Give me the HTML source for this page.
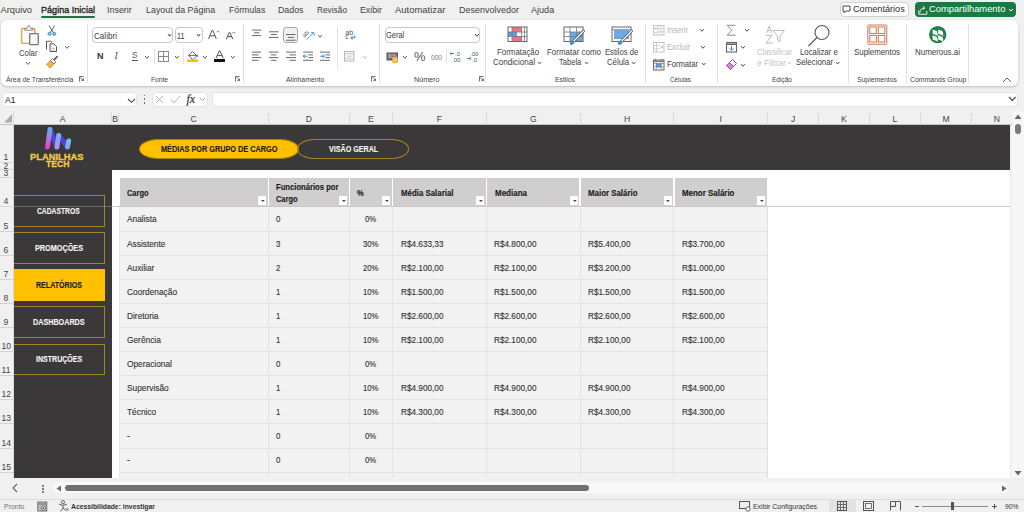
<!DOCTYPE html><html><head><meta charset="utf-8"><style>
html,body{margin:0;padding:0;width:1024px;height:512px;overflow:hidden;background:#f3f3f3}
.r{position:absolute;display:block}
.t{position:absolute;white-space:nowrap;line-height:1;font-family:"Liberation Sans",sans-serif;transform-origin:0 0}
svg.r{overflow:visible}
</style></head><body>
<div class="r" style="left:0.00px;top:0.00px;width:1024.00px;height:512.00px;background:#f0f0f0"></div>
<div class="t" style="left:0.50px;top:6.03px;font-size:9.30px;color:#424242;">Arquivo</div>
<div class="t" style="left:41.00px;top:6.03px;font-size:9.30px;color:#262626;transform:scaleX(0.976);-webkit-text-stroke:0.35px #262626;">Página Inicial</div>
<div class="t" style="left:107.20px;top:6.03px;font-size:9.30px;color:#424242;transform:scaleX(0.960);">Inserir</div>
<div class="t" style="left:145.70px;top:6.03px;font-size:9.30px;color:#424242;transform:scaleX(0.957);">Layout da Página</div>
<div class="t" style="left:228.70px;top:6.03px;font-size:9.30px;color:#424242;transform:scaleX(0.937);">Fórmulas</div>
<div class="t" style="left:278.20px;top:6.03px;font-size:9.30px;color:#424242;transform:scaleX(0.949);">Dados</div>
<div class="t" style="left:317.00px;top:6.03px;font-size:9.30px;color:#424242;transform:scaleX(0.893);">Revisão</div>
<div class="t" style="left:360.00px;top:6.03px;font-size:9.30px;color:#424242;transform:scaleX(0.946);">Exibir</div>
<div class="t" style="left:395.00px;top:6.03px;font-size:9.30px;color:#424242;transform:scaleX(1.016);">Automatizar</div>
<div class="t" style="left:458.60px;top:6.03px;font-size:9.30px;color:#424242;transform:scaleX(0.966);">Desenvolvedor</div>
<div class="t" style="left:531.30px;top:6.03px;font-size:9.30px;color:#424242;transform:scaleX(0.975);">Ajuda</div>
<div class="r" style="left:41.00px;top:16.20px;width:54.00px;height:2.00px;background:#1e7145;border-radius:1px"></div>
<div class="r" style="left:839.50px;top:1.50px;width:69.70px;height:15.90px;background:#fff;border:1px solid #d1d1d1;border-radius:4px;box-sizing:border-box"></div>
<svg class="r" style="left:842px;top:5px" width="9" height="9" viewBox="0 0 9 9"><path d="M1 1h7v5H3.8L2 7.8V6H1z" fill="none" stroke="#444" stroke-width="1"/></svg>
<div class="t" style="left:853.30px;top:5.23px;font-size:9.30px;color:#2a2a2a;transform:scaleX(0.981);">Comentários</div>
<div class="r" style="left:914.80px;top:1.50px;width:101.70px;height:15.90px;background:#1b7a43;border-radius:4px"></div>
<svg class="r" style="left:917px;top:4px" width="12" height="11" viewBox="0 0 12 11"><path d="M1.8 6.5v3.8h8V7" fill="none" stroke="#fff" stroke-width="0.9"/><path d="M3 8.5c0-3 2-4.5 4.5-4.5M6 2.3l1.8 1.7L6 5.8" fill="none" stroke="#fff" stroke-width="0.9"/></svg>
<div class="t" style="left:928.60px;top:5.23px;font-size:9.30px;color:#ffffff;transform:scaleX(1.005);">Compartilhamento</div>
<svg class="r" style="left:1008px;top:8px" width="6" height="4" viewBox="0 0 6 4"><path d="M1 1l2 2 2-2" fill="none" stroke="#fff" stroke-width="1"/></svg>
<div class="r" style="left:1.20px;top:19.80px;width:1017.00px;height:66.00px;background:#fff;border-radius:6px;box-shadow:0 1px 2.5px rgba(0,0,0,0.22)"></div>
<div class="r" style="left:86.50px;top:24.00px;width:1.00px;height:59.00px;background:#e1e1e1"></div>
<div class="r" style="left:242.70px;top:24.00px;width:1.00px;height:59.00px;background:#e1e1e1"></div>
<div class="r" style="left:378.50px;top:24.00px;width:1.00px;height:59.00px;background:#e1e1e1"></div>
<div class="r" style="left:485.40px;top:24.00px;width:1.00px;height:59.00px;background:#e1e1e1"></div>
<div class="r" style="left:644.60px;top:24.00px;width:1.00px;height:59.00px;background:#e1e1e1"></div>
<div class="r" style="left:717.40px;top:24.00px;width:1.00px;height:59.00px;background:#e1e1e1"></div>
<div class="r" style="left:847.60px;top:24.00px;width:1.00px;height:59.00px;background:#e1e1e1"></div>
<div class="r" style="left:906.20px;top:24.00px;width:1.00px;height:59.00px;background:#e1e1e1"></div>
<div class="r" style="left:968.00px;top:24.00px;width:1.00px;height:59.00px;background:#e1e1e1"></div>
<div class="t" style="left:5.50px;top:76.03px;font-size:7.40px;color:#424242;transform:scaleX(0.927);">Área de Transferência</div>
<div class="t" style="left:151.00px;top:76.03px;font-size:7.40px;color:#424242;transform:scaleX(0.898);">Fonte</div>
<div class="t" style="left:286.00px;top:76.03px;font-size:7.40px;color:#424242;transform:scaleX(0.933);">Alinhamento</div>
<div class="t" style="left:413.60px;top:76.03px;font-size:7.40px;color:#424242;transform:scaleX(0.969);">Número</div>
<div class="t" style="left:555.00px;top:76.03px;font-size:7.40px;color:#424242;transform:scaleX(0.918);">Estilos</div>
<div class="t" style="left:670.00px;top:76.03px;font-size:7.40px;color:#424242;transform:scaleX(0.851);">Células</div>
<div class="t" style="left:772.00px;top:76.03px;font-size:7.40px;color:#424242;transform:scaleX(0.884);">Edição</div>
<div class="t" style="left:857.00px;top:76.03px;font-size:7.40px;color:#424242;transform:scaleX(0.926);">Suplementos</div>
<div class="t" style="left:909.50px;top:76.03px;font-size:7.40px;color:#424242;transform:scaleX(0.935);">Commands Group</div>
<svg class="r" style="left:78.5px;top:76px" width="5" height="6" viewBox="0 0 5 6"><path d="M0.5 5.5V0.5h4M1.5 1.5l3 3M4.5 2.5v2h-2" fill="none" stroke="#616161" stroke-width="0.9"/></svg>
<svg class="r" style="left:234.7px;top:76px" width="5" height="6" viewBox="0 0 5 6"><path d="M0.5 5.5V0.5h4M1.5 1.5l3 3M4.5 2.5v2h-2" fill="none" stroke="#616161" stroke-width="0.9"/></svg>
<svg class="r" style="left:370.6px;top:76px" width="5" height="6" viewBox="0 0 5 6"><path d="M0.5 5.5V0.5h4M1.5 1.5l3 3M4.5 2.5v2h-2" fill="none" stroke="#616161" stroke-width="0.9"/></svg>
<svg class="r" style="left:478.5px;top:76px" width="5" height="6" viewBox="0 0 5 6"><path d="M0.5 5.5V0.5h4M1.5 1.5l3 3M4.5 2.5v2h-2" fill="none" stroke="#616161" stroke-width="0.9"/></svg>
<svg class="r" style="left:14px;top:20px" width="50" height="52" viewBox="0 0 50 52"><rect x="7.6" y="8.4" width="13.2" height="15" rx="0.8" fill="#fbfbfb" stroke="#e8a33a" stroke-width="1.4"/>
<path d="M10.6 10.2V8.6h2.2l1.6-3.2h0.8l1.6 3.2h2.2v1.6z" fill="#fff" stroke="#8a8a8a" stroke-width="1"/>
<rect x="15.7" y="13.7" width="8.6" height="11" rx="0.8" fill="#f6f6f6" stroke="#777" stroke-width="1.3"/>
<path d="M35 5.5l4.5 7.5M40.6 5.5l-4.5 7.5" stroke="#555" stroke-width="0.9"/>
<circle cx="35.5" cy="13.8" r="1.6" fill="#7ec0e6" stroke="#3f8fc0" stroke-width="0.8"/><circle cx="40.2" cy="13.8" r="1.6" fill="#7ec0e6" stroke="#3f8fc0" stroke-width="0.8"/>
<path d="M32.5 29.5V21.3h4.2l1.3 1.3" fill="none" stroke="#555" stroke-width="1"/>
<path d="M36 23.8h3.8l2.7 2.7v5h-6.5z" fill="#fff" stroke="#555" stroke-width="1"/><path d="M37.5 28.3h3.3M37.5 30h3.3" stroke="#aaa" stroke-width="0.8"/>
<path d="M32.5 44.5l4.5-4.5 3.5 3.5-4.5 4.5z" fill="#f3b54a" stroke="#de8f1e" stroke-width="0.8"/>
<path d="M36.5 40.5l2-2 3.5 3.5-2 2z" fill="#fff" stroke="#666" stroke-width="0.8"/>
<path d="M39.5 39.5l3.5-3.5 0.8 0.8-3.5 3.5z" fill="#666" stroke="#555" stroke-width="0.8"/></svg>
<div class="t" style="left:18.75px;top:48.73px;font-size:8.70px;color:#424242;transform:scaleX(0.890);">Colar</div>
<svg class="r" style="left:25px;top:61.1px" width="6" height="4.4"><path d="M1 1L3.0 3.4L5 1" fill="none" stroke="#616161" stroke-width="1.0"/></svg>
<svg class="r" style="left:64px;top:45px" width="6" height="4.4"><path d="M1 1L3.0 3.4L5 1" fill="none" stroke="#616161" stroke-width="1.0"/></svg>
<div class="r" style="left:92.40px;top:27.40px;width:80.80px;height:15.90px;background:#fff;border:1px solid #c8c8c8;border-radius:4px;box-sizing:border-box"></div>
<div class="t" style="left:94.00px;top:31.53px;font-size:8.70px;color:#3b3b3b;transform:scaleX(0.933);">Calibri</div>
<svg class="r" style="left:166.7px;top:32.8px" width="5.2" height="4.2"><path d="M1 1L2.6 3.2L4.2 1" fill="none" stroke="#424242" stroke-width="1.0"/></svg>
<div class="r" style="left:175.00px;top:27.40px;width:28.30px;height:15.90px;background:#fff;border:1px solid #c8c8c8;border-radius:4px;box-sizing:border-box"></div>
<div class="t" style="left:177.00px;top:31.53px;font-size:8.70px;color:#3b3b3b;transform:scaleX(0.819);">11</div>
<svg class="r" style="left:196.4px;top:32.8px" width="5.2" height="4.2"><path d="M1 1L2.6 3.2L4.2 1" fill="none" stroke="#424242" stroke-width="1.0"/></svg>
<svg class="r" style="left:207px;top:29px" width="16" height="12" viewBox="0 0 16 12"><path d="M1.5 10L5 1.3h0.8L9.3 10M2.8 6.8h5.2" fill="none" stroke="#555" stroke-width="1"/><path d="M9.8 3.3l1.4-1.4 1.4 1.4" fill="none" stroke="#3a8fd0" stroke-width="0.9"/></svg>
<svg class="r" style="left:225px;top:31px" width="14" height="10" viewBox="0 0 14 10"><path d="M1.3 8.2L4.2 1.5h0.7L7.8 8.2M2.4 5.6h4.3" fill="none" stroke="#555" stroke-width="1"/><path d="M7.5 1l1.3 1.3L10.1 1" fill="none" stroke="#3a8fd0" stroke-width="0.9"/></svg>
<div class="t" style="left:96.60px;top:51.51px;font-size:9.20px;font-weight:bold;color:#333;transform:scaleX(0.978);">N</div>
<div class="t" style="left:114.5px;top:50.5px;font-size:10px;font-family:'Liberation Serif',serif;font-style:italic;color:#555">I</div>
<div class="t" style="left:132.00px;top:51.38px;font-size:9.00px;color:#555;transform:scaleX(0.916);">S</div>
<div class="r" style="left:132.00px;top:60.00px;width:5.50px;height:1.00px;background:#555"></div>
<svg class="r" style="left:144px;top:54.5px" width="5.8" height="4.3"><path d="M1 1L2.9 3.3L4.8 1" fill="none" stroke="#616161" stroke-width="1.0"/></svg>
<div class="r" style="left:153.50px;top:49.00px;width:1.00px;height:15.00px;background:#e1e1e1"></div>
<svg class="r" style="left:157px;top:50px" width="13" height="13" viewBox="0 0 13 13"><rect x="1.5" y="1.5" width="10" height="10" fill="none" stroke="#8a8a8a" stroke-width="1"/><path d="M6.5 1.5v10M1.5 6.5h10" stroke="#8a8a8a" stroke-width="1"/></svg>
<svg class="r" style="left:173.5px;top:54.5px" width="5.8" height="4.3"><path d="M1 1L2.9 3.3L4.8 1" fill="none" stroke="#616161" stroke-width="1.0"/></svg>
<div class="r" style="left:182.50px;top:49.00px;width:1.00px;height:15.00px;background:#e1e1e1"></div>
<svg class="r" style="left:186px;top:50px" width="14" height="13" viewBox="0 0 14 13"><path d="M2.5 5.5l4-4 4.3 4.3-4 4z" fill="#fff" stroke="#555" stroke-width="0.9"/><path d="M2.5 5.5h8.3" stroke="#555" stroke-width="0.8"/><path d="M10.8 4.5q1.3 1.5 0.5 2.5" fill="none" stroke="#3a8fd0" stroke-width="1.2"/><rect x="1.2" y="9.4" width="11" height="2.6" fill="#f2c200"/></svg>
<svg class="r" style="left:202.3px;top:54.5px" width="5.8" height="4.3"><path d="M1 1L2.9 3.3L4.8 1" fill="none" stroke="#616161" stroke-width="1.0"/></svg>
<svg class="r" style="left:214px;top:50px" width="12" height="10" viewBox="0 0 12 10"><path d="M2 8.2L5.3 0.8h0.7L9.3 8.2M3.2 5.6h4.9" fill="none" stroke="#555" stroke-width="1"/></svg>
<div class="r" style="left:214.25px;top:59.40px;width:10.95px;height:2.60px;background:#111"></div>
<svg class="r" style="left:229.5px;top:54.5px" width="5.8" height="4.3"><path d="M1 1L2.9 3.3L4.8 1" fill="none" stroke="#616161" stroke-width="1.0"/></svg>
<div class="r" style="left:283.10px;top:27.10px;width:15.40px;height:16.00px;background:#efefef;border:1px solid #a8a8a8;border-radius:3px;box-sizing:border-box"></div>
<svg class="r" style="left:240px;top:24px" width="140" height="45" viewBox="0 0 140 45"><path d="M12 6.100000000000001H21.19999999999999" stroke="#6a6a6a" stroke-width="1.0"/><path d="M14 8.799999999999997H19.5" stroke="#6a6a6a" stroke-width="1.0"/><path d="M12 11.600000000000001H21.19999999999999" stroke="#6a6a6a" stroke-width="1.0"/><path d="M29 7.800000000000001H38.60000000000002" stroke="#6a6a6a" stroke-width="1.0"/><path d="M31 10.5H36.60000000000002" stroke="#6a6a6a" stroke-width="1.0"/><path d="M29 13.399999999999999H38.60000000000002" stroke="#6a6a6a" stroke-width="1.0"/><path d="M46 10.5H55.60000000000002" stroke="#6a6a6a" stroke-width="1.0"/><path d="M47.80000000000001 13.399999999999999H54" stroke="#6a6a6a" stroke-width="1.0"/><path d="M46 16.25H55.60000000000002" stroke="#6a6a6a" stroke-width="1.0"/><path d="M12 28.1H21" stroke="#6a6a6a" stroke-width="1.0"/><path d="M12 30.9H18.5" stroke="#6a6a6a" stroke-width="1.0"/><path d="M12 33.6H21" stroke="#6a6a6a" stroke-width="1.0"/><path d="M12 36.3H18.5" stroke="#6a6a6a" stroke-width="1.0"/><path d="M29 28.1H38.5" stroke="#6a6a6a" stroke-width="1.0"/><path d="M31 30.9H36.5" stroke="#6a6a6a" stroke-width="1.0"/><path d="M29 33.6H38.5" stroke="#6a6a6a" stroke-width="1.0"/><path d="M31 36.3H36.5" stroke="#6a6a6a" stroke-width="1.0"/><path d="M46 28.1H56" stroke="#6a6a6a" stroke-width="1.0"/><path d="M49.5 30.9H56" stroke="#6a6a6a" stroke-width="1.0"/><path d="M46 33.6H56" stroke="#6a6a6a" stroke-width="1.0"/><path d="M49.5 36.3H56" stroke="#6a6a6a" stroke-width="1.0"/><path d="M63 28.1H73" stroke="#6a6a6a" stroke-width="1.0"/><path d="M68.5 30.9H73" stroke="#6a6a6a" stroke-width="1.0"/><path d="M68.5 33.6H73" stroke="#6a6a6a" stroke-width="1.0"/><path d="M63 36.3H73" stroke="#6a6a6a" stroke-width="1.0"/><path d="M80 28.1H90" stroke="#6a6a6a" stroke-width="1.0"/><path d="M85.5 30.9H90" stroke="#6a6a6a" stroke-width="1.0"/><path d="M85.5 33.6H90" stroke="#6a6a6a" stroke-width="1.0"/><path d="M80 36.3H90" stroke="#6a6a6a" stroke-width="1.0"/><path d="M63 32.2h4.5M63 32.2l2-1.6M63 32.2l2 1.6" transform="translate(0,0)" fill="none" stroke="#3a8fd0" stroke-width="1"/><path d="M80 32.2h4.5M84.5 32.2l-2-1.6M84.5 32.2l-2 1.6" fill="none" stroke="#3a8fd0" stroke-width="1"/><text x="0" y="0" font-size="6.2" font-family="Liberation Sans" fill="#5a5a5a" transform="translate(64.5,14) rotate(-45)">ab</text><path d="M66.5 15.5L73.5 9" stroke="#3a8fd0" stroke-width="0.9"/><path d="M71 8.6h3v3" fill="none" stroke="#3a8fd0" stroke-width="0.9"/></svg>
<svg class="r" style="left:316.8px;top:33.6px" width="5.8" height="4.3"><path d="M1 1L2.9 3.3L4.8 1" fill="none" stroke="#616161" stroke-width="1.0"/></svg>
<div class="r" style="left:337.00px;top:27.00px;width:1.00px;height:41.00px;background:#e1e1e1"></div>
<svg class="r" style="left:344px;top:28px" width="14" height="14" viewBox="0 0 14 14"><text x="1.3" y="6.6" font-size="7" font-family="Liberation Sans" fill="#555" textLength="8" lengthAdjust="spacingAndGlyphs">ab</text><text x="1.3" y="11.2" font-size="6.5" font-family="Liberation Sans" fill="#555">c</text><path d="M10.8 7.2v2.6H6.8M6.8 9.8l1.8-1.5M6.8 9.8l1.8 1.5" fill="none" stroke="#3a9ad0" stroke-width="1.1"/></svg>
<svg class="r" style="left:344px;top:51px" width="11" height="11" viewBox="0 0 11 11"><rect x="0.5" y="0.5" width="9.5" height="9.5" fill="#f6f6f6" stroke="#b8b8b8"/><path d="M0.5 2.8h9.5M0.5 7.7h9.5M3 5.25h4.5" stroke="#c0c0c0" stroke-width="0.8"/></svg>
<svg class="r" style="left:362.3px;top:55px" width="5.8" height="4.3"><path d="M1 1L2.9 3.3L4.8 1" fill="none" stroke="#c4c4c4" stroke-width="1.0"/></svg>
<div class="r" style="left:384.50px;top:27.40px;width:95.90px;height:15.60px;background:#fff;border:1px solid #c8c8c8;border-radius:4px;box-sizing:border-box"></div>
<div class="t" style="left:386.00px;top:31.26px;font-size:8.90px;color:#3b3b3b;transform:scaleX(0.841);">Geral</div>
<svg class="r" style="left:473.8px;top:33.2px" width="5.8" height="4.3"><path d="M1 1L2.9 3.3L4.8 1" fill="none" stroke="#424242" stroke-width="1.0"/></svg>
<svg class="r" style="left:386px;top:52px" width="14" height="12" viewBox="0 0 14 12"><rect x="1" y="1" width="10.5" height="7" fill="#777" stroke="#555"/><path d="M2.5 3h3M2.5 5h3M6.5 3h3" stroke="#ddd" stroke-width="0.8"/><rect x="6" y="4.5" width="6" height="6.5" rx="2" fill="#f0a030"/><path d="M7 6.8h4M7 8.8h4" stroke="#fff" stroke-width="0.7"/></svg>
<svg class="r" style="left:401.9px;top:54.5px" width="5.8" height="4.3"><path d="M1 1L2.9 3.3L4.8 1" fill="none" stroke="#616161" stroke-width="1.0"/></svg>
<div class="t" style="left:413.50px;top:49.99px;font-size:13.00px;color:#555;transform:scaleX(0.995);">%</div>
<div class="t" style="left:431.00px;top:53.57px;font-size:7.00px;color:#777;transform:scaleX(0.942);">000</div>
<div class="r" style="left:446.00px;top:49.00px;width:1.00px;height:15.00px;background:#e1e1e1"></div>
<svg class="r" style="left:449px;top:50px" width="13" height="12" viewBox="0 0 13 12"><path d="M1 3.5h4M1 3.5l1.5-1.3M1 3.5l1.5 1.3" fill="none" stroke="#3a8fd0" stroke-width="1"/><text x="6" y="6" font-size="6" font-family="Liberation Sans" fill="#555">.0</text><text x="3" y="11.5" font-size="6" font-family="Liberation Sans" fill="#555">.00</text></svg>
<svg class="r" style="left:466px;top:50px" width="13" height="12" viewBox="0 0 13 12"><text x="4" y="5.5" font-size="6" font-family="Liberation Sans" fill="#555">.00</text><path d="M1 8.5h4M5 8.5l-1.5-1.3M5 8.5l-1.5 1.3" fill="none" stroke="#3a8fd0" stroke-width="1"/><text x="6" y="11.5" font-size="6" font-family="Liberation Sans" fill="#555">.0</text></svg>
<svg class="r" style="left:507px;top:26px" width="22" height="18" viewBox="0 0 22 18"><rect x="5" y="1" width="9.5" height="6" fill="#ee7480"/><rect x="1" y="6" width="9" height="4" fill="#5a9ee0"/><rect x="10" y="6" width="4.5" height="3" fill="#fff"/><rect x="5" y="10" width="9.5" height="5.5" fill="#ee7480"/><rect x="1" y="1" width="19" height="14.5" fill="none" stroke="#666" stroke-width="1"/><path d="M1 6h19M1 10.5h19M5 1v14.5M14.5 1v14.5M17.5 1v14.5" stroke="#777" stroke-width="0.8"/></svg>
<div class="t" style="left:496.60px;top:47.93px;font-size:8.70px;color:#424242;transform:scaleX(0.909);">Formatação</div>
<div class="t" style="left:492.70px;top:58.23px;font-size:8.70px;color:#424242;transform:scaleX(0.924);">Condicional</div>
<svg class="r" style="left:536.7px;top:60.6px" width="5.2" height="4"><path d="M1 1L2.6 3L4.2 1" fill="none" stroke="#616161" stroke-width="1.0"/></svg>
<svg class="r" style="left:563px;top:26px" width="24" height="20" viewBox="0 0 24 20"><rect x="7" y="6" width="13" height="9.5" fill="#6aaae8"/><rect x="1" y="1" width="19" height="14.5" fill="none" stroke="#666" stroke-width="1"/><path d="M1 6h19M1 10.5h19M7 1v14.5M13.5 1v14.5" stroke="#777" stroke-width="0.8"/><path d="M9.5 16.5L20.5 5" stroke="#555" stroke-width="2.8" stroke-linecap="round"/><path d="M9.5 16.5L20.5 5" stroke="#fff" stroke-width="1.2" stroke-linecap="round"/><ellipse cx="9" cy="16.8" rx="2.4" ry="1.8" fill="#3a8fd0" transform="rotate(-45 9 16.8)"/></svg>
<div class="t" style="left:546.60px;top:47.93px;font-size:8.70px;color:#424242;transform:scaleX(0.916);">Formatar como</div>
<div class="t" style="left:559.00px;top:58.23px;font-size:8.70px;color:#424242;transform:scaleX(0.870);">Tabela</div>
<svg class="r" style="left:583.7px;top:60.6px" width="5.2" height="4"><path d="M1 1L2.6 3L4.2 1" fill="none" stroke="#616161" stroke-width="1.0"/></svg>
<svg class="r" style="left:611px;top:26px" width="24" height="20" viewBox="0 0 24 20"><rect x="1" y="1" width="19" height="14.5" fill="#fff" stroke="#666" stroke-width="1"/><path d="M1 3.5h19" stroke="#888" stroke-width="0.8"/><rect x="3" y="4" width="15" height="8.5" fill="#6aaae8"/><path d="M3 12.5h15" stroke="#888" stroke-width="0.8"/><path d="M9.5 16.5L20.5 5" stroke="#555" stroke-width="2.8" stroke-linecap="round"/><path d="M9.5 16.5L20.5 5" stroke="#fff" stroke-width="1.2" stroke-linecap="round"/><ellipse cx="9" cy="16.8" rx="2.4" ry="1.8" fill="#3a8fd0" transform="rotate(-45 9 16.8)"/></svg>
<div class="t" style="left:605.00px;top:47.93px;font-size:8.70px;color:#424242;transform:scaleX(0.883);">Estilos de</div>
<div class="t" style="left:606.75px;top:58.23px;font-size:8.70px;color:#424242;transform:scaleX(0.892);">Célula</div>
<svg class="r" style="left:630.7px;top:60.6px" width="5.2" height="4"><path d="M1 1L2.6 3L4.2 1" fill="none" stroke="#616161" stroke-width="1.0"/></svg>
<svg class="r" style="left:652px;top:24px" width="14" height="12" viewBox="0 0 14 12"><rect x="1.5" y="1.5" width="10.5" height="9.5" fill="none" stroke="#c4c4c4" stroke-width="1"/><path d="M6 1.5v9.5M9 1.5v9.5M6 4.5h6M6 7.8h6" stroke="#c8c8c8" stroke-width="0.8"/><path d="M2.5 4.5h2.5M3.75 3.2v2.6M2.5 8.5h2.5" stroke="#b8b8b8" stroke-width="0.8"/></svg>
<div class="t" style="left:667.00px;top:25.83px;font-size:8.70px;color:#b4b4b4;transform:scaleX(0.869);">Inserir</div>
<svg class="r" style="left:699px;top:28px" width="5.8" height="4.3"><path d="M1 1L2.9 3.3L4.8 1" fill="none" stroke="#555" stroke-width="1.0"/></svg>
<svg class="r" style="left:652px;top:41px" width="14" height="12" viewBox="0 0 14 12"><rect x="1.5" y="1.5" width="10.5" height="9.5" fill="none" stroke="#c4c4c4" stroke-width="1"/><path d="M1.5 4.5h6M1.5 7.8h6M4.5 1.5v9.5" stroke="#c8c8c8" stroke-width="0.8"/><path d="M8.3 4.5l3 3M11.3 4.5l-3 3" stroke="#b8b8b8" stroke-width="0.8"/></svg>
<div class="t" style="left:667.00px;top:42.83px;font-size:8.70px;color:#b4b4b4;transform:scaleX(0.881);">Excluir</div>
<svg class="r" style="left:700px;top:45px" width="5.8" height="4.3"><path d="M1 1L2.9 3.3L4.8 1" fill="none" stroke="#555" stroke-width="1.0"/></svg>
<svg class="r" style="left:652px;top:58px" width="14" height="13" viewBox="0 0 14 13"><rect x="1.5" y="2" width="10.5" height="10" fill="#fff" stroke="#666" stroke-width="1"/><path d="M1.5 3.3h10.5" stroke="#666" stroke-width="1.2"/><rect x="4" y="5" width="5.5" height="4.5" fill="#5a9ee0"/><path d="M1.5 5.5h10.5M1.5 9h10.5M4.2 3.3v8.7M9.3 3.3v8.7" stroke="#888" stroke-width="0.7"/><path d="M3.5 0.8v2M10 0.8v2" stroke="#3a8fd0" stroke-width="1"/></svg>
<div class="t" style="left:667.00px;top:59.83px;font-size:8.70px;color:#3b3b3b;transform:scaleX(0.878);">Formatar</div>
<svg class="r" style="left:701px;top:62.3px" width="5.4" height="4"><path d="M1 1L2.7 3L4.4 1" fill="none" stroke="#555" stroke-width="1.0"/></svg>
<svg class="r" style="left:724px;top:23px" width="14" height="14" viewBox="0 0 14 14"><path d="M11.5 2.3H3.2l4.6 5-4.6 4.9h8.6" fill="none" stroke="#8a8a8a" stroke-width="1"/></svg>
<svg class="r" style="left:743.7px;top:28px" width="5.8" height="4.3"><path d="M1 1L2.9 3.3L4.8 1" fill="none" stroke="#555" stroke-width="1.0"/></svg>
<svg class="r" style="left:725px;top:41px" width="13" height="12" viewBox="0 0 13 12"><rect x="1.5" y="1.5" width="10" height="9.5" fill="#fff" stroke="#666" stroke-width="1.1"/><path d="M1.5 3.2h10" stroke="#666" stroke-width="1.6"/><path d="M6.5 4.8v4.5M6.5 9.3l-2-2M6.5 9.3l2-2" fill="none" stroke="#3a8fd0" stroke-width="1"/></svg>
<svg class="r" style="left:739.8px;top:45.4px" width="5.8" height="4.3"><path d="M1 1L2.9 3.3L4.8 1" fill="none" stroke="#555" stroke-width="1.0"/></svg>
<svg class="r" style="left:725px;top:58px" width="13" height="13" viewBox="0 0 13 13"><path d="M1.5 7.5l6-6 4 4-6 6z" fill="#fff" stroke="#a848a8" stroke-width="1"/><path d="M1.5 7.5l3-3 4 4-3 3z" fill="#d88ad0" stroke="#a848a8" stroke-width="1"/></svg>
<svg class="r" style="left:740px;top:62.5px" width="5.8" height="4.3"><path d="M1 1L2.9 3.3L4.8 1" fill="none" stroke="#555" stroke-width="1.0"/></svg>
<svg class="r" style="left:764px;top:24px" width="24" height="21" viewBox="0 0 24 21"><path d="M2.5 9L5.2 2l2.8 7M3.4 6.6h3.7M2 11.5h6l-6 7.5h6.5M9 6.5h11.5L16 12v5.5l-2.5-1.5V12z" fill="none" stroke="#bdbdbd" stroke-width="1"/></svg>
<div class="t" style="left:757.00px;top:48.23px;font-size:8.70px;color:#c4c4c4;transform:scaleX(0.872);">Classificar</div>
<div class="t" style="left:757.00px;top:58.73px;font-size:8.70px;color:#c4c4c4;transform:scaleX(0.983);">e Filtrar</div>
<svg class="r" style="left:787px;top:60.5px" width="5.2" height="4"><path d="M1 1L2.6 3L4.2 1" fill="none" stroke="#c4c4c4" stroke-width="1.0"/></svg>
<svg class="r" style="left:807px;top:24px" width="24" height="23" viewBox="0 0 24 23"><circle cx="15" cy="8.5" r="7" fill="none" stroke="#555" stroke-width="1.1"/><path d="M10 13.5L1.5 22" stroke="#555" stroke-width="1.1"/></svg>
<div class="t" style="left:799.60px;top:48.03px;font-size:8.70px;color:#3b3b3b;transform:scaleX(0.898);">Localizar e</div>
<div class="t" style="left:796.30px;top:58.43px;font-size:8.70px;color:#3b3b3b;transform:scaleX(0.905);">Selecionar</div>
<svg class="r" style="left:835px;top:60.5px" width="5.4" height="4"><path d="M1 1L2.7 3L4.4 1" fill="none" stroke="#555" stroke-width="1.0"/></svg>
<svg class="r" style="left:866px;top:24px" width="22" height="22" viewBox="0 0 22 22"><rect x="1.8" y="1" width="19" height="19.3" rx="0.8" fill="#fdf4ef" stroke="#cf7a55" stroke-width="1"/><rect x="3.8" y="3" width="6.5" height="6.5" fill="#fff" stroke="#cf7a55" stroke-width="1"/><rect x="12.3" y="3" width="6.5" height="6.5" fill="#fff" stroke="#cf7a55" stroke-width="1"/><rect x="3.8" y="11.5" width="6.5" height="6.5" fill="#fff" stroke="#cf7a55" stroke-width="1"/><rect x="12.3" y="11.5" width="6.5" height="6.5" fill="#fff" stroke="#cf7a55" stroke-width="1"/></svg>
<div class="t" style="left:854.00px;top:48.23px;font-size:8.70px;color:#3b3b3b;transform:scaleX(0.906);">Suplementos</div>
<svg class="r" style="left:928px;top:25px" width="20" height="20" viewBox="0 0 20 20"><circle cx="9.7" cy="9.6" r="8.7" fill="#1f8048"/><g fill="#fff"><path d="M4.6 4.6h4.1l0.9 2v3.2L8.7 8.8H4.6z" transform="skewY(20) translate(0,-1.7)"/><path d="M10.2 4.6h4.1l0.9 2v3.2l-0.9-1H10.2z" transform="skewY(20) translate(0,-3.7)"/><path d="M4.6 10.3h4.1l0.9 2v3.2l-0.9-1H4.6z" transform="skewY(20) translate(0,-1.7)"/><path d="M10.2 10.3h4.1l0.9 2v3.2l-0.9-1H10.2z" transform="skewY(20) translate(0,-3.7)"/></g></svg>
<div class="t" style="left:915.00px;top:48.23px;font-size:8.70px;color:#3b3b3b;transform:scaleX(0.912);">Numerous.ai</div>
<svg class="r" style="left:1002px;top:77px" width="10" height="6" viewBox="0 0 10 6"><path d="M1 5l4-4 4 4" fill="none" stroke="#555" stroke-width="1"/></svg>
<div class="r" style="left:2.00px;top:91.60px;width:135.00px;height:15.70px;background:#fff;border:1px solid #e3e3e3;border-radius:4px;box-sizing:border-box"></div>
<div class="t" style="left:4.50px;top:95.34px;font-size:9.40px;color:#262626;transform:scaleX(0.913);">A1</div>
<svg class="r" style="left:127px;top:97.8px" width="9" height="5.3"><path d="M1 1L4.5 4.3L8 1" fill="none" stroke="#4a4a4a" stroke-width="1.1"/></svg>
<div class="r" style="left:143.50px;top:94.50px;width:1.50px;height:1.50px;background:#555;border-radius:1px"></div>
<div class="r" style="left:143.50px;top:98.30px;width:1.50px;height:1.50px;background:#555;border-radius:1px"></div>
<div class="r" style="left:143.50px;top:102.10px;width:1.50px;height:1.50px;background:#555;border-radius:1px"></div>
<div class="r" style="left:152.00px;top:91.60px;width:56.00px;height:15.70px;background:#fff;border:1px solid #e3e3e3;border-radius:4px;box-sizing:border-box"></div>
<svg class="r" style="left:155px;top:95px" width="9" height="9" viewBox="0 0 9 9"><path d="M1 1l7 7M8 1l-7 7" stroke="#b0b0b0" stroke-width="0.9"/></svg>
<svg class="r" style="left:170px;top:95px" width="11" height="9" viewBox="0 0 11 9"><path d="M1 4.5l3 3.5 6-7" fill="none" stroke="#b0b0b0" stroke-width="0.9"/></svg>
<div class="t" style="left:186.5px;top:93px;font-size:12px;font-family:'Liberation Serif',serif;font-style:italic;color:#333;-webkit-text-stroke:0.2px #333">fx</div>
<svg class="r" style="left:199px;top:97px" width="7" height="5" viewBox="0 0 7 5"><path d="M1 1l2.5 2.5L6 1" fill="none" stroke="#9a9a9a" stroke-width="0.9"/></svg>
<div class="r" style="left:211.60px;top:91.60px;width:806.40px;height:15.70px;background:#fff;border:1px solid #e3e3e3;border-radius:4px;box-sizing:border-box"></div>
<svg class="r" style="left:1008.3px;top:96.3px" width="8.6" height="5.5"><path d="M1 1L4.3 4.5L7.6 1" fill="none" stroke="#555" stroke-width="1.3"/></svg>
<div class="r" style="left:0.00px;top:111.00px;width:1012.00px;height:13.50px;background:#f0f0f0"></div>
<div class="r" style="left:0.00px;top:124.00px;width:1012.00px;height:0.50px;background:#c6c6c6"></div>
<svg class="r" style="left:3px;top:113px" width="10" height="10" viewBox="0 0 10 10"><path d="M9 1.3V9.5H1z" fill="#ababab"/></svg>
<div class="r" style="left:111.10px;top:113.00px;width:1.00px;height:11.50px;background:#dadada"></div>
<div class="t" style="left:59.68px;top:115.02px;font-size:8.60px;color:#444;">A</div>
<div class="r" style="left:118.00px;top:113.00px;width:1.00px;height:11.50px;background:#dadada"></div>
<div class="t" style="left:112.18px;top:115.02px;font-size:8.60px;color:#444;">B</div>
<div class="r" style="left:268.00px;top:113.00px;width:1.00px;height:11.50px;background:#dadada"></div>
<div class="t" style="left:190.39px;top:115.02px;font-size:8.60px;color:#444;">C</div>
<div class="r" style="left:348.90px;top:113.00px;width:1.00px;height:11.50px;background:#dadada"></div>
<div class="t" style="left:305.84px;top:115.02px;font-size:8.60px;color:#444;">D</div>
<div class="r" style="left:392.00px;top:113.00px;width:1.00px;height:11.50px;background:#dadada"></div>
<div class="t" style="left:368.08px;top:115.02px;font-size:8.60px;color:#444;">E</div>
<div class="r" style="left:486.00px;top:113.00px;width:1.00px;height:11.50px;background:#dadada"></div>
<div class="t" style="left:436.87px;top:115.02px;font-size:8.60px;color:#444;">F</div>
<div class="r" style="left:579.80px;top:113.00px;width:1.00px;height:11.50px;background:#dadada"></div>
<div class="t" style="left:530.06px;top:115.02px;font-size:8.60px;color:#444;">G</div>
<div class="r" style="left:673.40px;top:113.00px;width:1.00px;height:11.50px;background:#dadada"></div>
<div class="t" style="left:623.99px;top:115.02px;font-size:8.60px;color:#444;">H</div>
<div class="r" style="left:767.00px;top:113.00px;width:1.00px;height:11.50px;background:#dadada"></div>
<div class="t" style="left:719.51px;top:115.02px;font-size:8.60px;color:#444;">I</div>
<div class="r" style="left:818.10px;top:113.00px;width:1.00px;height:11.50px;background:#dadada"></div>
<div class="t" style="left:790.90px;top:115.02px;font-size:8.60px;color:#444;">J</div>
<div class="r" style="left:868.80px;top:113.00px;width:1.00px;height:11.50px;background:#dadada"></div>
<div class="t" style="left:841.08px;top:115.02px;font-size:8.60px;color:#444;">K</div>
<div class="r" style="left:920.20px;top:113.00px;width:1.00px;height:11.50px;background:#dadada"></div>
<div class="t" style="left:892.61px;top:115.02px;font-size:8.60px;color:#444;">L</div>
<div class="r" style="left:971.00px;top:113.00px;width:1.00px;height:11.50px;background:#dadada"></div>
<div class="t" style="left:942.52px;top:115.02px;font-size:8.60px;color:#444;">M</div>
<div class="r" style="left:1021.80px;top:113.00px;width:1.00px;height:11.50px;background:#dadada"></div>
<div class="t" style="left:993.79px;top:115.02px;font-size:8.60px;color:#444;">N</div>
<div class="r" style="left:13.00px;top:111.00px;width:0.70px;height:366.60px;background:#dadada"></div>
<div class="r" style="left:0.00px;top:162.00px;width:13.50px;height:1.00px;background:#d4d4d4"></div>
<div class="t" style="left:3.50px;top:153.02px;font-size:8.60px;color:#444;">1</div>
<div class="r" style="left:0.00px;top:169.00px;width:13.50px;height:1.00px;background:#d4d4d4"></div>
<div class="t" style="left:3.50px;top:161.72px;font-size:8.60px;color:#444;">2</div>
<div class="r" style="left:0.00px;top:176.75px;width:13.50px;height:1.00px;background:#d4d4d4"></div>
<div class="t" style="left:3.50px;top:169.47px;font-size:8.60px;color:#444;">3</div>
<div class="r" style="left:0.00px;top:206.10px;width:13.50px;height:1.00px;background:#d4d4d4"></div>
<div class="t" style="left:3.50px;top:197.12px;font-size:8.60px;color:#444;">4</div>
<div class="r" style="left:0.00px;top:230.80px;width:13.50px;height:1.00px;background:#d4d4d4"></div>
<div class="t" style="left:3.50px;top:221.82px;font-size:8.60px;color:#444;">5</div>
<div class="r" style="left:0.00px;top:254.88px;width:13.50px;height:1.00px;background:#d4d4d4"></div>
<div class="t" style="left:3.50px;top:245.90px;font-size:8.60px;color:#444;">6</div>
<div class="r" style="left:0.00px;top:278.96px;width:13.50px;height:1.00px;background:#d4d4d4"></div>
<div class="t" style="left:3.50px;top:269.98px;font-size:8.60px;color:#444;">7</div>
<div class="r" style="left:0.00px;top:303.04px;width:13.50px;height:1.00px;background:#d4d4d4"></div>
<div class="t" style="left:3.50px;top:294.06px;font-size:8.60px;color:#444;">8</div>
<div class="r" style="left:0.00px;top:327.12px;width:13.50px;height:1.00px;background:#d4d4d4"></div>
<div class="t" style="left:3.50px;top:318.14px;font-size:8.60px;color:#444;">9</div>
<div class="r" style="left:0.00px;top:351.20px;width:13.50px;height:1.00px;background:#d4d4d4"></div>
<div class="t" style="left:1.50px;top:342.22px;font-size:8.60px;color:#444;">10</div>
<div class="r" style="left:0.00px;top:375.28px;width:13.50px;height:1.00px;background:#d4d4d4"></div>
<div class="t" style="left:1.50px;top:366.30px;font-size:8.60px;color:#444;">11</div>
<div class="r" style="left:0.00px;top:399.36px;width:13.50px;height:1.00px;background:#d4d4d4"></div>
<div class="t" style="left:1.50px;top:390.38px;font-size:8.60px;color:#444;">12</div>
<div class="r" style="left:0.00px;top:423.44px;width:13.50px;height:1.00px;background:#d4d4d4"></div>
<div class="t" style="left:1.50px;top:414.46px;font-size:8.60px;color:#444;">13</div>
<div class="r" style="left:0.00px;top:447.52px;width:13.50px;height:1.00px;background:#d4d4d4"></div>
<div class="t" style="left:1.50px;top:438.54px;font-size:8.60px;color:#444;">14</div>
<div class="r" style="left:0.00px;top:471.60px;width:13.50px;height:1.00px;background:#d4d4d4"></div>
<div class="t" style="left:1.50px;top:462.62px;font-size:8.60px;color:#444;">15</div>
<div class="r" style="left:13.70px;top:124.50px;width:996.70px;height:353.10px;background:#ffffff"></div>
<div class="r" style="left:13.70px;top:124.50px;width:996.70px;height:45.00px;background:#3a3838"></div>
<div class="r" style="left:13.70px;top:124.50px;width:98.10px;height:353.10px;background:#3a3838"></div>
<svg class="r" style="left:44px;top:126px" width="29" height="25" viewBox="0 0 29 25"><defs><linearGradient id="g1" gradientUnits="userSpaceOnUse" x1="0" y1="22" x2="0" y2="2"><stop offset="0" stop-color="#e83cbc"/><stop offset="0.45" stop-color="#b07ad8"/><stop offset="1" stop-color="#5ab0f0"/></linearGradient>
<linearGradient id="g2" gradientUnits="userSpaceOnUse" x1="0" y1="2" x2="0" y2="22"><stop offset="0" stop-color="#4a50e8"/><stop offset="1" stop-color="#5a38d8"/></linearGradient>
<linearGradient id="g3" gradientUnits="userSpaceOnUse" x1="0" y1="22" x2="0" y2="8"><stop offset="0" stop-color="#b890e8"/><stop offset="1" stop-color="#68b8f0"/></linearGradient>
<linearGradient id="g4" gradientUnits="userSpaceOnUse" x1="0" y1="22" x2="0" y2="14"><stop offset="0" stop-color="#80a8f0"/><stop offset="1" stop-color="#6cc0f0"/></linearGradient></defs>
<path d="M6 3.5L12.5 20.5" stroke="url(#g2)" stroke-width="4.9" stroke-linecap="round"/>
<path d="M14.6 9.5L23.3 20.8" stroke="url(#g2)" stroke-width="4.9" stroke-linecap="round"/>
<path d="M3.5 21L6 3.5" stroke="url(#g1)" stroke-width="4.9" stroke-linecap="round"/>
<path d="M13 21L14.6 9.5" stroke="url(#g3)" stroke-width="4.9" stroke-linecap="round"/>
<path d="M23.5 21L24.7 15" stroke="url(#g4)" stroke-width="4.9" stroke-linecap="round"/></svg>
<div class="t" style="left:30.30px;top:153.05px;font-size:8.80px;font-weight:bold;color:#f0c94a;transform:scaleX(1.062);-webkit-text-stroke:0.3px #f0c94a;">PLANILHAS</div>
<div class="t" style="left:46.00px;top:159.95px;font-size:8.80px;font-weight:bold;color:#f0c94a;transform:scaleX(0.977);-webkit-text-stroke:0.3px #f0c94a;">TECH</div>
<div class="r" style="left:13.70px;top:195.40px;width:91.10px;height:31.60px;border:1px solid #a48428;border-left:none;box-sizing:border-box"></div>
<div class="t" style="left:36.75px;top:207.43px;font-size:8.70px;font-weight:bold;color:#f2f2f2;transform:scaleX(0.776);-webkit-text-stroke:0.15px #f2f2f2;">CADASTROS</div>
<div class="r" style="left:13.70px;top:232.25px;width:91.10px;height:31.35px;border:1px solid #a48428;border-left:none;box-sizing:border-box"></div>
<div class="t" style="left:34.90px;top:244.16px;font-size:8.70px;font-weight:bold;color:#f2f2f2;transform:scaleX(0.836);-webkit-text-stroke:0.15px #f2f2f2;">PROMOÇÕES</div>
<div class="r" style="left:13.70px;top:269.00px;width:91.10px;height:32.40px;background:#ffc000"></div>
<div class="t" style="left:36.00px;top:281.43px;font-size:8.70px;font-weight:bold;color:#1e1e1e;transform:scaleX(0.816);-webkit-text-stroke:0.15px #1e1e1e;">RELATÓRIOS</div>
<div class="r" style="left:13.70px;top:306.00px;width:91.10px;height:31.60px;border:1px solid #a48428;border-left:none;box-sizing:border-box"></div>
<div class="t" style="left:33.30px;top:318.03px;font-size:8.70px;font-weight:bold;color:#f2f2f2;transform:scaleX(0.829);-webkit-text-stroke:0.15px #f2f2f2;">DASHBOARDS</div>
<div class="r" style="left:13.70px;top:343.50px;width:91.10px;height:31.30px;border:1px solid #a48428;border-left:none;box-sizing:border-box"></div>
<div class="t" style="left:35.80px;top:355.38px;font-size:8.70px;font-weight:bold;color:#f2f2f2;transform:scaleX(0.812);-webkit-text-stroke:0.15px #f2f2f2;">INSTRUÇÕES</div>
<div class="r" style="left:138.60px;top:139.20px;width:160.30px;height:19.90px;background:#ffc000;border:1px solid #a88400;box-sizing:border-box;border-radius:19px/10px"></div>
<div class="r" style="left:297.30px;top:138.60px;width:111.70px;height:20.30px;border:1px solid #a48428;border-radius:17px/10px;box-sizing:border-box"></div>
<div class="t" style="left:161.25px;top:144.93px;font-size:8.70px;font-weight:bold;color:#1e1e1e;transform:scaleX(0.840);-webkit-text-stroke:0.15px #1e1e1e;">MÉDIAS POR GRUPO DE CARGO</div>
<div class="t" style="left:328.60px;top:144.63px;font-size:8.70px;font-weight:bold;color:#f2f2f2;transform:scaleX(0.821);-webkit-text-stroke:0.15px #f2f2f2;">VISÃO GERAL</div>
<div class="r" style="left:119.50px;top:178.40px;width:148.20px;height:27.90px;background:#d0cece"></div>
<div class="r" style="left:257.30px;top:195.00px;width:10.20px;height:10.90px;background:#fff;border:1px solid #cfcfcf;box-sizing:border-box"></div>
<svg class="r" style="left:259.9px;top:199.4px" width="6" height="4" viewBox="0 0 6 4"><path d="M1 1h3.8L2.9 3.1z" fill="#444"/></svg>
<div class="r" style="left:269.20px;top:178.40px;width:79.40px;height:27.90px;background:#d0cece"></div>
<div class="r" style="left:338.20px;top:195.00px;width:10.20px;height:10.90px;background:#fff;border:1px solid #cfcfcf;box-sizing:border-box"></div>
<svg class="r" style="left:340.8px;top:199.4px" width="6" height="4" viewBox="0 0 6 4"><path d="M1 1h3.8L2.9 3.1z" fill="#444"/></svg>
<div class="r" style="left:350.10px;top:178.40px;width:41.60px;height:27.90px;background:#d0cece"></div>
<div class="r" style="left:381.30px;top:195.00px;width:10.20px;height:10.90px;background:#fff;border:1px solid #cfcfcf;box-sizing:border-box"></div>
<svg class="r" style="left:383.9px;top:199.4px" width="6" height="4" viewBox="0 0 6 4"><path d="M1 1h3.8L2.9 3.1z" fill="#444"/></svg>
<div class="r" style="left:393.20px;top:178.40px;width:92.50px;height:27.90px;background:#d0cece"></div>
<div class="r" style="left:475.30px;top:195.00px;width:10.20px;height:10.90px;background:#fff;border:1px solid #cfcfcf;box-sizing:border-box"></div>
<svg class="r" style="left:477.9px;top:199.4px" width="6" height="4" viewBox="0 0 6 4"><path d="M1 1h3.8L2.9 3.1z" fill="#444"/></svg>
<div class="r" style="left:487.20px;top:178.40px;width:92.30px;height:27.90px;background:#d0cece"></div>
<div class="r" style="left:569.10px;top:195.00px;width:10.20px;height:10.90px;background:#fff;border:1px solid #cfcfcf;box-sizing:border-box"></div>
<svg class="r" style="left:571.7px;top:199.4px" width="6" height="4" viewBox="0 0 6 4"><path d="M1 1h3.8L2.9 3.1z" fill="#444"/></svg>
<div class="r" style="left:581.00px;top:178.40px;width:92.10px;height:27.90px;background:#d0cece"></div>
<div class="r" style="left:662.70px;top:195.00px;width:10.20px;height:10.90px;background:#fff;border:1px solid #cfcfcf;box-sizing:border-box"></div>
<svg class="r" style="left:665.3px;top:199.4px" width="6" height="4" viewBox="0 0 6 4"><path d="M1 1h3.8L2.9 3.1z" fill="#444"/></svg>
<div class="r" style="left:674.60px;top:178.40px;width:92.10px;height:27.90px;background:#d0cece"></div>
<div class="r" style="left:756.30px;top:195.00px;width:10.20px;height:10.90px;background:#fff;border:1px solid #cfcfcf;box-sizing:border-box"></div>
<svg class="r" style="left:758.9px;top:199.4px" width="6" height="4" viewBox="0 0 6 4"><path d="M1 1h3.8L2.9 3.1z" fill="#444"/></svg>
<div class="r" style="left:118.50px;top:206.60px;width:649.00px;height:271.00px;background:#f2f2f2"></div>
<div class="r" style="left:118.50px;top:230.80px;width:649.00px;height:1.00px;background:#e2e2e2"></div>
<div class="r" style="left:118.50px;top:254.88px;width:649.00px;height:1.00px;background:#e2e2e2"></div>
<div class="r" style="left:118.50px;top:278.96px;width:649.00px;height:1.00px;background:#e2e2e2"></div>
<div class="r" style="left:118.50px;top:303.04px;width:649.00px;height:1.00px;background:#e2e2e2"></div>
<div class="r" style="left:118.50px;top:327.12px;width:649.00px;height:1.00px;background:#e2e2e2"></div>
<div class="r" style="left:118.50px;top:351.20px;width:649.00px;height:1.00px;background:#e2e2e2"></div>
<div class="r" style="left:118.50px;top:375.28px;width:649.00px;height:1.00px;background:#e2e2e2"></div>
<div class="r" style="left:118.50px;top:399.36px;width:649.00px;height:1.00px;background:#e2e2e2"></div>
<div class="r" style="left:118.50px;top:423.44px;width:649.00px;height:1.00px;background:#e2e2e2"></div>
<div class="r" style="left:118.50px;top:447.52px;width:649.00px;height:1.00px;background:#e2e2e2"></div>
<div class="r" style="left:118.50px;top:471.60px;width:649.00px;height:1.00px;background:#e2e2e2"></div>
<div class="r" style="left:118.50px;top:495.68px;width:649.00px;height:1.00px;background:#e2e2e2"></div>
<div class="r" style="left:268.00px;top:206.60px;width:1.00px;height:271.00px;background:#e4e4e4"></div>
<div class="r" style="left:348.90px;top:206.60px;width:1.00px;height:271.00px;background:#e4e4e4"></div>
<div class="r" style="left:392.00px;top:206.60px;width:1.00px;height:271.00px;background:#e4e4e4"></div>
<div class="r" style="left:486.00px;top:206.60px;width:1.00px;height:271.00px;background:#e4e4e4"></div>
<div class="r" style="left:579.80px;top:206.60px;width:1.00px;height:271.00px;background:#e4e4e4"></div>
<div class="r" style="left:673.40px;top:206.60px;width:1.00px;height:271.00px;background:#e4e4e4"></div>
<div class="r" style="left:118.50px;top:206.60px;width:0.80px;height:271.00px;background:#e6e6e6"></div>
<div class="r" style="left:767.10px;top:206.60px;width:0.80px;height:271.00px;background:#e0e0e0"></div>
<div class="r" style="left:13.70px;top:206.10px;width:996.70px;height:1.00px;background:#9a9a9a;opacity:0.55"></div>
<div class="t" style="left:126.90px;top:188.52px;font-size:8.60px;font-weight:bold;color:#1e1e1e;transform:scaleX(0.865);-webkit-text-stroke:0.15px #1e1e1e;">Cargo</div>
<div class="t" style="left:276.25px;top:183.12px;font-size:8.60px;font-weight:bold;color:#1e1e1e;transform:scaleX(0.890);-webkit-text-stroke:0.15px #1e1e1e;">Funcionários por</div>
<div class="t" style="left:276.25px;top:194.62px;font-size:8.60px;font-weight:bold;color:#1e1e1e;transform:scaleX(0.865);-webkit-text-stroke:0.15px #1e1e1e;">Cargo</div>
<div class="t" style="left:357.00px;top:188.52px;font-size:8.60px;font-weight:bold;color:#1e1e1e;transform:scaleX(0.876);-webkit-text-stroke:0.15px #1e1e1e;">%</div>
<div class="t" style="left:400.50px;top:188.52px;font-size:8.60px;font-weight:bold;color:#1e1e1e;transform:scaleX(0.915);-webkit-text-stroke:0.15px #1e1e1e;">Média Salarial</div>
<div class="t" style="left:494.50px;top:188.52px;font-size:8.60px;font-weight:bold;color:#1e1e1e;transform:scaleX(0.930);-webkit-text-stroke:0.15px #1e1e1e;">Mediana</div>
<div class="t" style="left:588.00px;top:188.52px;font-size:8.60px;font-weight:bold;color:#1e1e1e;transform:scaleX(0.917);-webkit-text-stroke:0.15px #1e1e1e;">Maior Salário</div>
<div class="t" style="left:682.00px;top:188.52px;font-size:8.60px;font-weight:bold;color:#1e1e1e;transform:scaleX(0.923);-webkit-text-stroke:0.15px #1e1e1e;">Menor Salário</div>
<div class="t" style="left:126.50px;top:215.42px;font-size:8.60px;color:#333;transform:scaleX(0.970);-webkit-text-stroke:0.12px #333;">Analista</div>
<div class="t" style="left:276.00px;top:215.42px;font-size:8.60px;color:#333;transform:scaleX(0.920);-webkit-text-stroke:0.12px #333;">0</div>
<div class="t" style="left:365.41px;top:215.42px;font-size:8.60px;color:#333;transform:scaleX(0.900);-webkit-text-stroke:0.12px #333;">0%</div>
<div class="t" style="left:126.50px;top:239.50px;font-size:8.60px;color:#333;transform:scaleX(0.970);-webkit-text-stroke:0.12px #333;">Assistente</div>
<div class="t" style="left:276.00px;top:239.50px;font-size:8.60px;color:#333;transform:scaleX(0.920);-webkit-text-stroke:0.12px #333;">3</div>
<div class="t" style="left:363.25px;top:239.50px;font-size:8.60px;color:#333;transform:scaleX(0.900);-webkit-text-stroke:0.12px #333;">30%</div>
<div class="t" style="left:400.60px;top:239.50px;font-size:8.60px;color:#333;transform:scaleX(0.956);-webkit-text-stroke:0.12px #333;">R$4.633,33</div>
<div class="t" style="left:494.40px;top:239.50px;font-size:8.60px;color:#333;transform:scaleX(0.956);-webkit-text-stroke:0.12px #333;">R$4.800,00</div>
<div class="t" style="left:588.20px;top:239.50px;font-size:8.60px;color:#333;transform:scaleX(0.956);-webkit-text-stroke:0.12px #333;">R$5.400,00</div>
<div class="t" style="left:681.80px;top:239.50px;font-size:8.60px;color:#333;transform:scaleX(0.956);-webkit-text-stroke:0.12px #333;">R$3.700,00</div>
<div class="t" style="left:126.50px;top:263.58px;font-size:8.60px;color:#333;transform:scaleX(0.970);-webkit-text-stroke:0.12px #333;">Auxiliar</div>
<div class="t" style="left:276.00px;top:263.58px;font-size:8.60px;color:#333;transform:scaleX(0.920);-webkit-text-stroke:0.12px #333;">2</div>
<div class="t" style="left:363.25px;top:263.58px;font-size:8.60px;color:#333;transform:scaleX(0.900);-webkit-text-stroke:0.12px #333;">20%</div>
<div class="t" style="left:400.60px;top:263.58px;font-size:8.60px;color:#333;transform:scaleX(0.956);-webkit-text-stroke:0.12px #333;">R$2.100,00</div>
<div class="t" style="left:494.40px;top:263.58px;font-size:8.60px;color:#333;transform:scaleX(0.956);-webkit-text-stroke:0.12px #333;">R$2.100,00</div>
<div class="t" style="left:588.20px;top:263.58px;font-size:8.60px;color:#333;transform:scaleX(0.956);-webkit-text-stroke:0.12px #333;">R$3.200,00</div>
<div class="t" style="left:681.80px;top:263.58px;font-size:8.60px;color:#333;transform:scaleX(0.956);-webkit-text-stroke:0.12px #333;">R$1.000,00</div>
<div class="t" style="left:126.50px;top:287.66px;font-size:8.60px;color:#333;transform:scaleX(0.970);-webkit-text-stroke:0.12px #333;">Coordenação</div>
<div class="t" style="left:276.00px;top:287.66px;font-size:8.60px;color:#333;transform:scaleX(0.920);-webkit-text-stroke:0.12px #333;">1</div>
<div class="t" style="left:363.25px;top:287.66px;font-size:8.60px;color:#333;transform:scaleX(0.900);-webkit-text-stroke:0.12px #333;">10%</div>
<div class="t" style="left:400.60px;top:287.66px;font-size:8.60px;color:#333;transform:scaleX(0.956);-webkit-text-stroke:0.12px #333;">R$1.500,00</div>
<div class="t" style="left:494.40px;top:287.66px;font-size:8.60px;color:#333;transform:scaleX(0.956);-webkit-text-stroke:0.12px #333;">R$1.500,00</div>
<div class="t" style="left:588.20px;top:287.66px;font-size:8.60px;color:#333;transform:scaleX(0.956);-webkit-text-stroke:0.12px #333;">R$1.500,00</div>
<div class="t" style="left:681.80px;top:287.66px;font-size:8.60px;color:#333;transform:scaleX(0.956);-webkit-text-stroke:0.12px #333;">R$1.500,00</div>
<div class="t" style="left:126.50px;top:311.74px;font-size:8.60px;color:#333;transform:scaleX(0.970);-webkit-text-stroke:0.12px #333;">Diretoria</div>
<div class="t" style="left:276.00px;top:311.74px;font-size:8.60px;color:#333;transform:scaleX(0.920);-webkit-text-stroke:0.12px #333;">1</div>
<div class="t" style="left:363.25px;top:311.74px;font-size:8.60px;color:#333;transform:scaleX(0.900);-webkit-text-stroke:0.12px #333;">10%</div>
<div class="t" style="left:400.60px;top:311.74px;font-size:8.60px;color:#333;transform:scaleX(0.956);-webkit-text-stroke:0.12px #333;">R$2.600,00</div>
<div class="t" style="left:494.40px;top:311.74px;font-size:8.60px;color:#333;transform:scaleX(0.956);-webkit-text-stroke:0.12px #333;">R$2.600,00</div>
<div class="t" style="left:588.20px;top:311.74px;font-size:8.60px;color:#333;transform:scaleX(0.956);-webkit-text-stroke:0.12px #333;">R$2.600,00</div>
<div class="t" style="left:681.80px;top:311.74px;font-size:8.60px;color:#333;transform:scaleX(0.956);-webkit-text-stroke:0.12px #333;">R$2.600,00</div>
<div class="t" style="left:126.50px;top:335.82px;font-size:8.60px;color:#333;transform:scaleX(0.970);-webkit-text-stroke:0.12px #333;">Gerência</div>
<div class="t" style="left:276.00px;top:335.82px;font-size:8.60px;color:#333;transform:scaleX(0.920);-webkit-text-stroke:0.12px #333;">1</div>
<div class="t" style="left:363.25px;top:335.82px;font-size:8.60px;color:#333;transform:scaleX(0.900);-webkit-text-stroke:0.12px #333;">10%</div>
<div class="t" style="left:400.60px;top:335.82px;font-size:8.60px;color:#333;transform:scaleX(0.956);-webkit-text-stroke:0.12px #333;">R$2.100,00</div>
<div class="t" style="left:494.40px;top:335.82px;font-size:8.60px;color:#333;transform:scaleX(0.956);-webkit-text-stroke:0.12px #333;">R$2.100,00</div>
<div class="t" style="left:588.20px;top:335.82px;font-size:8.60px;color:#333;transform:scaleX(0.956);-webkit-text-stroke:0.12px #333;">R$2.100,00</div>
<div class="t" style="left:681.80px;top:335.82px;font-size:8.60px;color:#333;transform:scaleX(0.956);-webkit-text-stroke:0.12px #333;">R$2.100,00</div>
<div class="t" style="left:126.50px;top:359.90px;font-size:8.60px;color:#333;transform:scaleX(0.970);-webkit-text-stroke:0.12px #333;">Operacional</div>
<div class="t" style="left:276.00px;top:359.90px;font-size:8.60px;color:#333;transform:scaleX(0.920);-webkit-text-stroke:0.12px #333;">0</div>
<div class="t" style="left:365.41px;top:359.90px;font-size:8.60px;color:#333;transform:scaleX(0.900);-webkit-text-stroke:0.12px #333;">0%</div>
<div class="t" style="left:126.50px;top:383.98px;font-size:8.60px;color:#333;transform:scaleX(0.970);-webkit-text-stroke:0.12px #333;">Supervisão</div>
<div class="t" style="left:276.00px;top:383.98px;font-size:8.60px;color:#333;transform:scaleX(0.920);-webkit-text-stroke:0.12px #333;">1</div>
<div class="t" style="left:363.25px;top:383.98px;font-size:8.60px;color:#333;transform:scaleX(0.900);-webkit-text-stroke:0.12px #333;">10%</div>
<div class="t" style="left:400.60px;top:383.98px;font-size:8.60px;color:#333;transform:scaleX(0.956);-webkit-text-stroke:0.12px #333;">R$4.900,00</div>
<div class="t" style="left:494.40px;top:383.98px;font-size:8.60px;color:#333;transform:scaleX(0.956);-webkit-text-stroke:0.12px #333;">R$4.900,00</div>
<div class="t" style="left:588.20px;top:383.98px;font-size:8.60px;color:#333;transform:scaleX(0.956);-webkit-text-stroke:0.12px #333;">R$4.900,00</div>
<div class="t" style="left:681.80px;top:383.98px;font-size:8.60px;color:#333;transform:scaleX(0.956);-webkit-text-stroke:0.12px #333;">R$4.900,00</div>
<div class="t" style="left:126.50px;top:408.06px;font-size:8.60px;color:#333;transform:scaleX(0.970);-webkit-text-stroke:0.12px #333;">Técnico</div>
<div class="t" style="left:276.00px;top:408.06px;font-size:8.60px;color:#333;transform:scaleX(0.920);-webkit-text-stroke:0.12px #333;">1</div>
<div class="t" style="left:363.25px;top:408.06px;font-size:8.60px;color:#333;transform:scaleX(0.900);-webkit-text-stroke:0.12px #333;">10%</div>
<div class="t" style="left:400.60px;top:408.06px;font-size:8.60px;color:#333;transform:scaleX(0.956);-webkit-text-stroke:0.12px #333;">R$4.300,00</div>
<div class="t" style="left:494.40px;top:408.06px;font-size:8.60px;color:#333;transform:scaleX(0.956);-webkit-text-stroke:0.12px #333;">R$4.300,00</div>
<div class="t" style="left:588.20px;top:408.06px;font-size:8.60px;color:#333;transform:scaleX(0.956);-webkit-text-stroke:0.12px #333;">R$4.300,00</div>
<div class="t" style="left:681.80px;top:408.06px;font-size:8.60px;color:#333;transform:scaleX(0.956);-webkit-text-stroke:0.12px #333;">R$4.300,00</div>
<div class="t" style="left:126.50px;top:432.14px;font-size:8.60px;color:#333;transform:scaleX(0.970);-webkit-text-stroke:0.12px #333;">-</div>
<div class="t" style="left:276.00px;top:432.14px;font-size:8.60px;color:#333;transform:scaleX(0.920);-webkit-text-stroke:0.12px #333;">0</div>
<div class="t" style="left:365.41px;top:432.14px;font-size:8.60px;color:#333;transform:scaleX(0.900);-webkit-text-stroke:0.12px #333;">0%</div>
<div class="t" style="left:126.50px;top:456.22px;font-size:8.60px;color:#333;transform:scaleX(0.970);-webkit-text-stroke:0.12px #333;">-</div>
<div class="t" style="left:276.00px;top:456.22px;font-size:8.60px;color:#333;transform:scaleX(0.920);-webkit-text-stroke:0.12px #333;">0</div>
<div class="t" style="left:365.41px;top:456.22px;font-size:8.60px;color:#333;transform:scaleX(0.900);-webkit-text-stroke:0.12px #333;">0%</div>
<div class="r" style="left:1012.00px;top:111.00px;width:12.00px;height:366.60px;background:#f7f7f7"></div>
<svg class="r" style="left:1014px;top:114px" width="8" height="6" viewBox="0 0 8 6"><path d="M4 0.5L7.5 5h-7z" fill="#666"/></svg>
<div class="r" style="left:1015.00px;top:123.50px;width:6.00px;height:10.50px;background:#7a7a7a;border-radius:3px"></div>
<svg class="r" style="left:1014px;top:470px" width="8" height="6" viewBox="0 0 8 6"><path d="M4 5.5L7.5 1h-7z" fill="#666"/></svg>
<div class="r" style="left:0.00px;top:477.60px;width:1024.00px;height:21.40px;background:#f0f0f0"></div>
<svg class="r" style="left:11px;top:483px" width="8" height="10" viewBox="0 0 8 10"><path d="M6 1L2 5l4 4" fill="none" stroke="#666" stroke-width="1.1"/></svg>
<div class="r" style="left:42.30px;top:485.00px;width:1.50px;height:1.50px;background:#555;border-radius:1px"></div>
<div class="r" style="left:42.30px;top:488.00px;width:1.50px;height:1.50px;background:#555;border-radius:1px"></div>
<div class="r" style="left:42.30px;top:491.00px;width:1.50px;height:1.50px;background:#555;border-radius:1px"></div>
<div class="r" style="left:53.40px;top:482.20px;width:955.60px;height:11.20px;background:#f8f8f8;border-radius:6px"></div>
<svg class="r" style="left:56px;top:485px" width="6" height="7" viewBox="0 0 6 7"><path d="M0.5 3.5L5 0.5v6z" fill="#6a6a6a"/></svg>
<div class="r" style="left:65.00px;top:485.10px;width:524.00px;height:5.90px;background:#707070;border-radius:3px"></div>
<svg class="r" style="left:1001px;top:485px" width="6" height="7" viewBox="0 0 6 7"><path d="M5.5 3.5L1 0.5v6z" fill="#6a6a6a"/></svg>
<div class="r" style="left:0.00px;top:498.60px;width:1024.00px;height:0.70px;background:#dedede"></div>
<div class="t" style="left:3.50px;top:503.07px;font-size:7.60px;color:#707070;transform:scaleX(0.915);">Pronto</div>
<svg class="r" style="left:37px;top:501px" width="11" height="11" viewBox="0 0 11 11"><rect x="0.8" y="1" width="9" height="9" fill="#bdbdbd" stroke="#6a6a6a" stroke-width="0.9"/><path d="M0.8 3h9" stroke="#6a6a6a" stroke-width="0.9"/><circle cx="6.3" cy="7.2" r="2.3" fill="#fff" stroke="#555" stroke-width="0.8"/><circle cx="6.3" cy="7.2" r="1" fill="#333"/></svg>
<svg class="r" style="left:58px;top:500px" width="12" height="12" viewBox="0 0 12 12"><circle cx="5" cy="2.2" r="1.6" fill="none" stroke="#555" stroke-width="0.9"/><path d="M1 4.2l4 1.2 4-1.2M5 5.4v2.6l-2.5 3.5M5 8l2 2" fill="none" stroke="#555" stroke-width="0.9"/><path d="M7.5 8l3 3M10.5 8l-3 3" stroke="#555" stroke-width="0.8"/></svg>
<div class="t" style="left:71.00px;top:502.77px;font-size:7.60px;font-weight:bold;color:#333;transform:scaleX(0.896);">Acessibilidade: investigar</div>
<svg class="r" style="left:739px;top:501px" width="13" height="11" viewBox="0 0 13 11"><rect x="0.5" y="0.5" width="10" height="7" fill="none" stroke="#555"/><circle cx="9" cy="8" r="2.2" fill="#fff" stroke="#555" stroke-width="0.9"/></svg>
<div class="t" style="left:752.50px;top:502.77px;font-size:7.60px;color:#333;transform:scaleX(0.913);">Exibir Configurações</div>
<div class="r" style="left:829.00px;top:499.30px;width:26.60px;height:12.70px;background:#e2e2e2"></div>
<svg class="r" style="left:837px;top:501px" width="11" height="10" viewBox="0 0 11 10"><rect x="0.5" y="0.5" width="9" height="9" fill="none" stroke="#555"/><path d="M3.5 0.5v9M6.5 0.5v9M0.5 3.5h9M0.5 6.5h9" stroke="#555" stroke-width="0.8"/></svg>
<svg class="r" style="left:863px;top:501px" width="11" height="10" viewBox="0 0 11 10"><rect x="0.5" y="0.5" width="10" height="9" fill="none" stroke="#555"/><rect x="2.5" y="2.5" width="6" height="5" fill="none" stroke="#555" stroke-width="0.8"/></svg>
<svg class="r" style="left:890px;top:501px" width="11" height="10" viewBox="0 0 11 10"><path d="M0.5 9.5V0.5h10v9M5.5 0.5v5h-5" fill="none" stroke="#555"/></svg>
<div class="r" style="left:915.00px;top:505.50px;width:3.50px;height:1.00px;background:#555"></div>
<div class="r" style="left:922.00px;top:505.60px;width:66.00px;height:0.80px;background:#8a8a8a"></div>
<div class="r" style="left:951.00px;top:502.00px;width:2.50px;height:8.00px;background:#555"></div>
<div class="r" style="left:992.00px;top:505.50px;width:5.00px;height:1.00px;background:#555"></div>
<div class="r" style="left:994.00px;top:503.50px;width:1.00px;height:5.00px;background:#555"></div>
<div class="t" style="left:1005.00px;top:502.77px;font-size:7.60px;color:#333;transform:scaleX(0.887);">90%</div>
</body></html>
